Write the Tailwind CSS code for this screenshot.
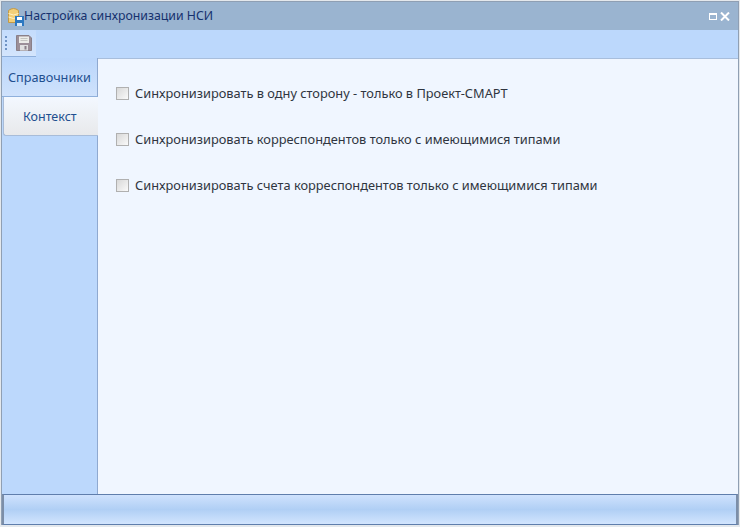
<!DOCTYPE html>
<html lang="ru">
<head>
    <meta charset="UTF-8">
    <title>Настройка синхронизации НСИ</title>
    <script src="https://cdn.jsdelivr.net/npm/@tailwindcss/browser@4"></script>
</head>
<body class="bg-white font-['Noto_Sans',sans-serif]">

    <!-- Window -->
    <div class="w-[740px] h-[527px] flex flex-col bg-[#e4e8ec] pt-px pr-px pb-[2px] pl-px overflow-hidden">
        <div class="flex-1 flex flex-col border border-[#8f9fb3] border-b-0 min-h-0">

            <!-- Title bar -->
            <div class="h-[28px] shrink-0 bg-[#9ab4d0] flex items-center pl-[5px] pr-[8px]">
                <svg width="17" height="19" viewBox="0 0 17 19" class="shrink-0 mt-[1px]">
                    <path d="M1.5 3.5 Q6.5 -0.5 11.5 3.5 V15.5 H1.5 Z" fill="#f3cf78" stroke="#c49a45"/>
                    <path d="M1.5 6.5 Q6.5 9.5 11.5 6.5 M1.5 10 Q6.5 13 11.5 10" fill="none" stroke="#fff3c8"/>
                    <rect x="8" y="9" width="9" height="10" fill="#2c78c0"/>
                    <rect x="10" y="10" width="5" height="3" fill="#fff"/>
                    <rect x="10" y="16" width="5" height="3" fill="#d8e8f8"/>
                </svg>
                <span class="text-[12.3px] leading-none text-[#15316e]">Настройка синхронизации НСИ</span>
                <div class="ml-auto flex items-center gap-[3px]">
                    <div class="w-[8px] h-[7px] border border-white border-t-2"></div>
                    <svg width="10" height="9" viewBox="0 0 10 9"><path d="M1 0.5 L9 8.5 M9 0.5 L1 8.5" stroke="#fff" stroke-width="2"/></svg>
                </div>
            </div>

            <!-- Toolbar -->
            <div class="h-[28px] shrink-0 bg-[#bcd8fc] flex items-start">
                <div class="w-[34px] h-[27px] bg-gradient-to-b from-[#c4dcfc] to-[#d4e5fc] border-b border-[#8fb0dc] flex items-center pl-[3px] gap-[9px]">
                    <div class="flex flex-col gap-[2px]">
                        <div class="w-[2px] h-[2px] bg-[#6f93c4]"></div>
                        <div class="w-[2px] h-[2px] bg-[#6f93c4]"></div>
                        <div class="w-[2px] h-[2px] bg-[#6f93c4]"></div>
                        <div class="w-[2px] h-[2px] bg-[#6f93c4]"></div>
                    </div>
                    <svg width="16" height="16" viewBox="0 0 16 16">
                        <path d="M0.5 0.5 H13 L15.5 3 V15.5 H0.5 Z" fill="#9c8f98" stroke="#8a8088"/>
                        <rect x="3" y="1.5" width="10" height="6.5" fill="#ecece8"/>
                        <path d="M4.5 3.5 H11.5 M4.5 5.5 H11.5" stroke="#c4c4c0"/>
                        <rect x="4" y="10" width="8" height="5.5" fill="#e0e0e0"/>
                        <rect x="8.5" y="11" width="2" height="3.5" fill="#8a8088"/>
                    </svg>
                </div>
            </div>

            <div class="flex-1 flex min-h-0">
                <!-- Tabs -->
                <div class="w-[96px] shrink-0 bg-[#bcd8fc] flex flex-col">
                    <div class="h-[39px] bg-gradient-to-b from-[#bad6fb] to-[#cfe2fc] border-b border-[#8fb0dc] border-r border-r-[#8fa9d0] flex items-center pl-[6px] pt-[1px] text-[12.7px] text-[#1f4f8f]">Справочники</div>
                    <div class="h-[39px] ml-[1px] w-[95px] bg-gradient-to-b from-[#f3f8ff] to-[#e8e9eb] border-l border-b border-[#a8bcd8] rounded-bl-[3px] flex items-center pl-[19px] pt-[3px] text-[12.5px] text-[#1f4f8f]">Контекст</div>
                    <div class="flex-1 border-r border-[#8fa9d0]"></div>
                </div>

                <!-- Content -->
                <div class="flex-1 bg-[#f0f6ff] border-t border-[#a8bedc] pl-[18px] pt-[25px] flex flex-col gap-[27px]">
                    <label class="h-[19px] flex items-center gap-[6px] text-[12.8px] text-[#2f3540]">
                        <span class="w-[13px] h-[13px] border border-[#b0b0b0] bg-gradient-to-br from-[#d8d8d8] to-[#fafafa] shrink-0"></span>
                        Синхронизировать в одну сторону - только в Проект-СМАРТ
                    </label>
                    <label class="h-[19px] flex items-center gap-[6px] text-[12.8px] text-[#2f3540]">
                        <span class="w-[13px] h-[13px] border border-[#b0b0b0] bg-gradient-to-br from-[#d8d8d8] to-[#fafafa] shrink-0"></span>
                        Синхронизировать корреспондентов только с имеющимися типами
                    </label>
                    <label class="h-[19px] flex items-center gap-[6px] text-[12.8px] text-[#2f3540]">
                        <span class="w-[13px] h-[13px] border border-[#b0b0b0] bg-gradient-to-br from-[#d8d8d8] to-[#fafafa] shrink-0"></span>
                        Синхронизировать счета корреспондентов только с имеющимися типами
                    </label>
                </div>
            </div>

            <!-- Status bar -->
            <div class="h-[31px] shrink-0 border border-[#5f7eac] border-l-[2px] border-r-[2px] border-l-[#7c8ea8] border-r-[#7c8ea8] bg-gradient-to-b from-[#cfe2fd] via-[#b0cff5] to-[#d2e5fe]"></div>
        </div>
    </div>

</body>
</html>
